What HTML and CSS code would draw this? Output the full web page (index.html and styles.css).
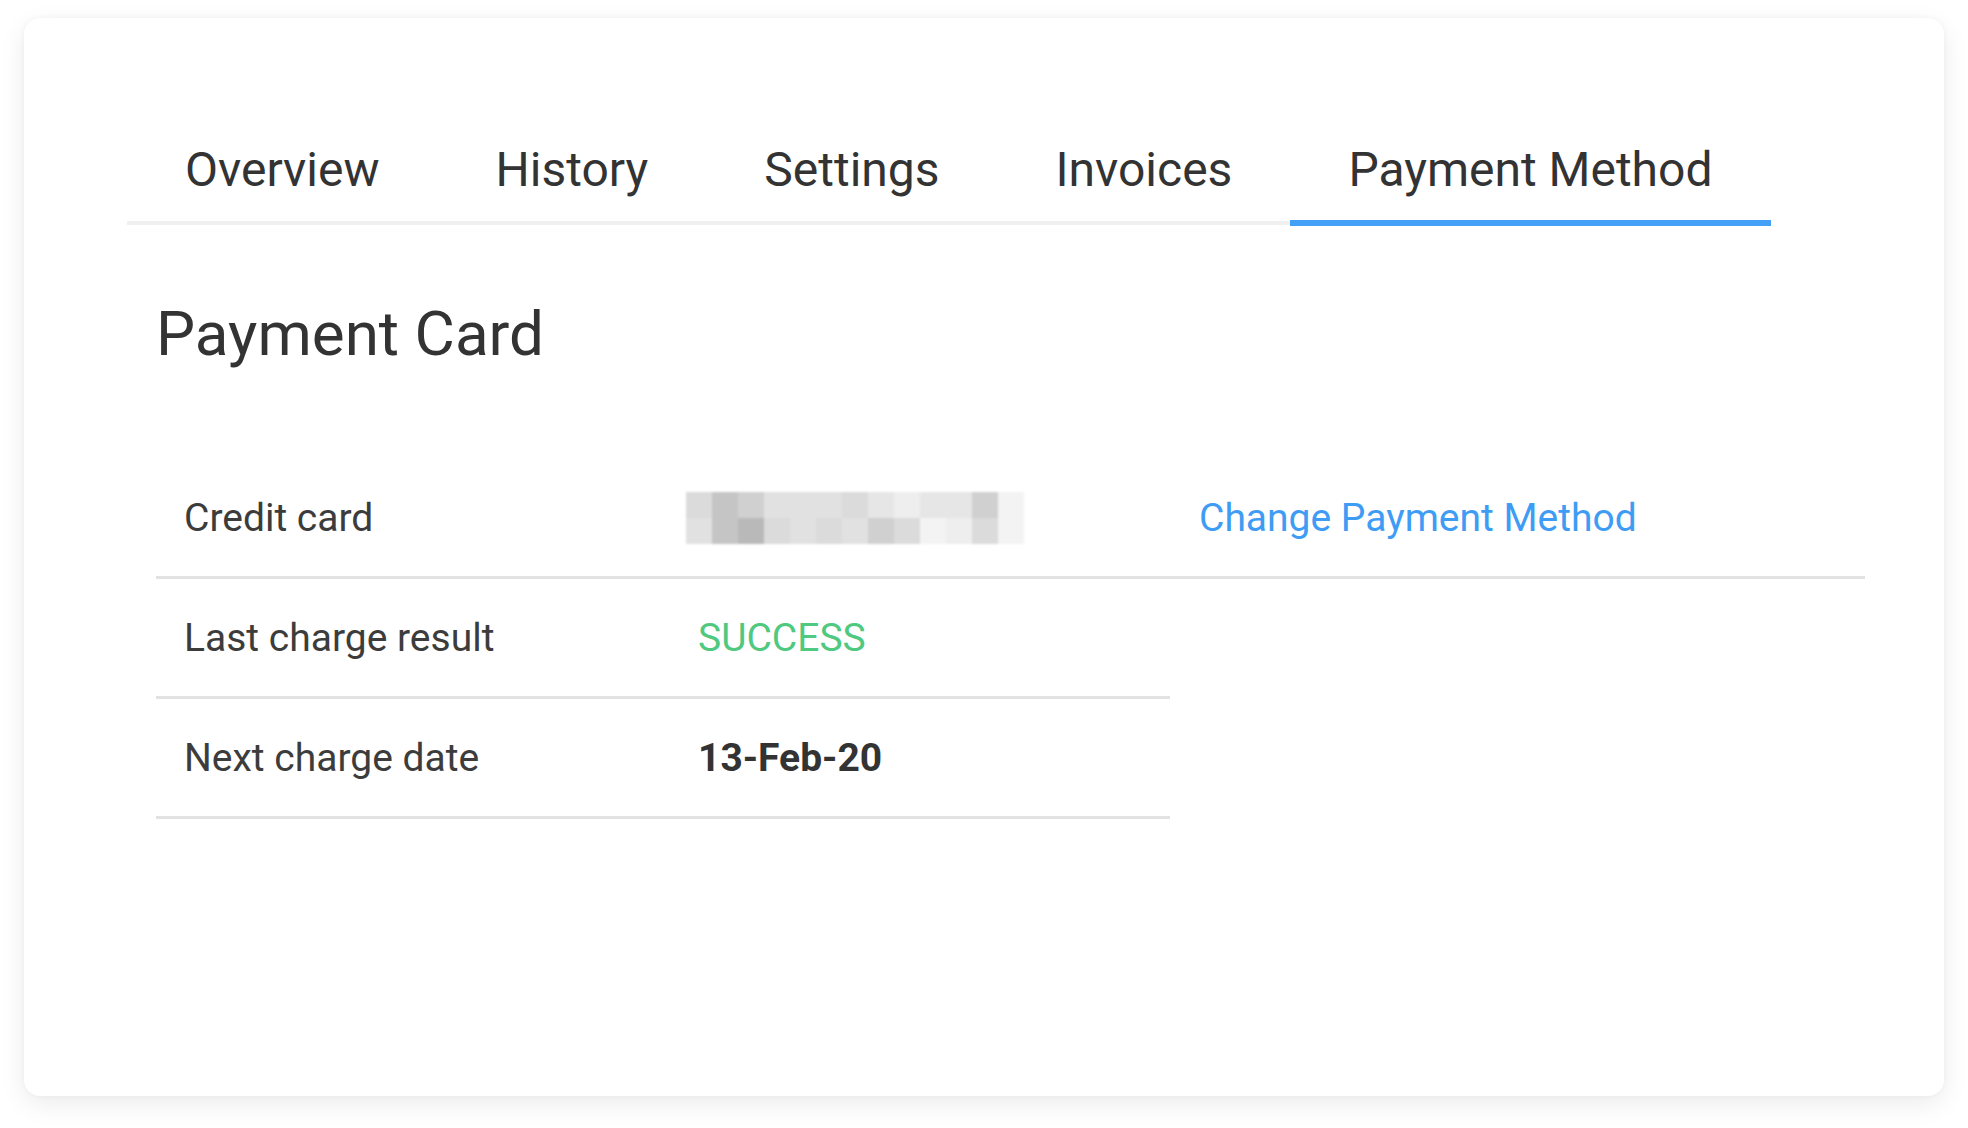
FILE: index.html
```html
<!DOCTYPE html>
<html lang="en">
<head>
  <meta charset="UTF-8">
  <meta name="viewport" content="width=device-width, initial-scale=1.0">
  <title>Payment Method</title>
  <link rel="stylesheet" href="styles.css">
</head>
<body>
  <div class="card">
    <!-- Tabs -->
    <div class="tabs">
      <a class="tab" href="#overview">Overview</a>
      <a class="tab" href="#history">History</a>
      <a class="tab" href="#settings">Settings</a>
      <a class="tab" href="#invoices">Invoices</a>
      <a class="tab active" href="#payment">Payment Method</a>
    </div>

    <!-- Payment Card -->
    <section class="content">
      <h1>Payment Card</h1>

      <div class="row wide">
        <div class="label">Credit card</div>
        <div class="value masked">
          <div class="pixels">
            <span class="g3"></span><span class="g1"></span><span class="g2"></span><span class="g4"></span><span class="g4"></span><span class="g4"></span><span class="g3"></span><span class="g5"></span><span class="g6"></span><span class="g5"></span><span class="g5"></span><span class="g2"></span><span class="g7"></span>
            <span class="g4"></span><span class="g1"></span><span class="g0"></span><span class="g3"></span><span class="g4"></span><span class="g3"></span><span class="g4"></span><span class="g2"></span><span class="g3"></span><span class="g7"></span><span class="g6"></span><span class="g3"></span><span class="g7"></span>
          </div>
        </div>
        <div class="action"><a href="#change">Change Payment Method</a></div>
      </div>

      <div class="row">
        <div class="label">Last charge result</div>
        <div class="value success">SUCCESS</div>
      </div>

      <div class="row">
        <div class="label">Next charge date</div>
        <div class="value strong">13-Feb-20</div>
      </div>
    </section>
  </div>
</body>
</html>
```

FILE: styles.css
```css
/* General Styling */
body {
  margin: 0;
  padding: 0;
  background: #fff;
  font-family: Roboto, "Liberation Sans", Arial, sans-serif;
  color: #333;
}

.card {
  margin: 18px 24px 32px;
  height: 1078px;
  background: #fff;
  border-radius: 16px;
  box-shadow: 0 8px 26px rgba(0, 0, 0, 0.08), 0 0 6px rgba(0, 0, 0, 0.04);
  padding-top: 101px;
  box-sizing: border-box;
}

/* Tabs */
.tabs {
  display: inline-flex;
  margin-left: 103px;
  border-bottom: 4px solid #f0f0f0;
}

.tab {
  display: flex;
  align-items: center;
  height: 101px;
  padding: 0 58px;
  margin-bottom: -5px;
  border-bottom: 6px solid transparent;
  font-size: 48px;
  color: #333;
  text-decoration: none;
}

.tab.active {
  border-bottom-color: #42a0f7;
}

/* Payment Card section */
.content {
  padding: 0 0 0 132px;
}

h1 {
  margin: 69px 0 0;
  font-size: 62px;
  font-weight: 400;
  line-height: 80px;
  color: #333;
}

.row {
  display: flex;
  align-items: center;
  width: 1014px;
  height: 117px;
  border-bottom: 3px solid #e2e2e2;
  font-size: 39px;
}

.row.wide {
  width: 1709px;
  margin-top: 85px;
}

.label {
  width: 514px;
  padding-left: 28px;
  box-sizing: border-box;
  color: #3c3c3c;
}

.value {
  width: 500px;
  padding-left: 28px;
  box-sizing: border-box;
}

.value.masked {
  padding-left: 16px;
}

.success {
  color: #4fc97f;
}

.strong {
  font-weight: 700;
  color: #333;
}

.action {
  padding-left: 29px;
}

.action a {
  color: #3f9cf5;
  text-decoration: none;
}

/* Blurred card number */
.pixels {
  display: grid;
  grid-template-columns: repeat(13, 26px);
  grid-auto-rows: 26px;
  filter: blur(1px);
}

.g0 { background: #b9b9b9; }
.g1 { background: #c5c5c5; }
.g2 { background: #d0d0d0; }
.g3 { background: #dbdbdb; }
.g4 { background: #e1e1e1; }
.g5 { background: #e6e6e6; }
.g6 { background: #eeeeee; }
.g7 { background: #f3f3f3; }
```
